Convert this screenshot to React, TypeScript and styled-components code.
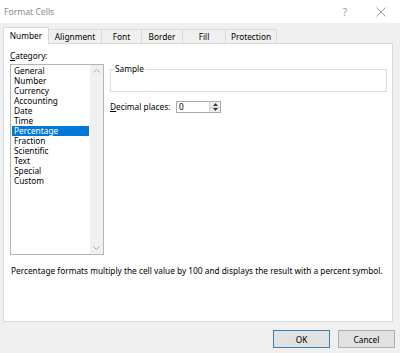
import React from "react";
import styled, { createGlobalStyle } from "styled-components";

const FS = "8.3px";

const Global = createGlobalStyle`
  html, body { margin: 0; padding: 0; background: #f0f0f0; }
  body { font-family: "Segoe UI", "Noto Sans", "Open Sans", sans-serif; font-size: ${FS}; color: #000; }
  * { box-sizing: border-box; }
`;

const Window = styled.div`
  width: 400px;
  height: 353px;
  background: #f0f0f0;
  display: flex;
  flex-direction: column;
  overflow: hidden;
`;

const TitleBar = styled.div`
  height: 23px;
  background: #fff;
  display: flex;
  align-items: center;
  padding-left: 4px;
`;

const Title = styled.div`
  flex: 1;
  color: #8a8a8a;
  font-size: 8.6px;
`;

const TitleButton = styled.div<{ $w: number }>`
  width: ${(p) => p.$w}px;
  height: 23px;
  display: flex;
  align-items: center;
  justify-content: center;
  color: #9a9a9a;
  font-size: 10px;
`;

const TabStrip = styled.div`
  display: flex;
  margin: 6px 0 0 3px;
  height: 15px;
  position: relative;
  z-index: 1;
`;

const Tab = styled.div<{ $w: number; $active?: boolean }>`
  width: ${(p) => p.$w}px;
  height: ${(p) => (p.$active ? 17 : 15)}px;
  margin-top: ${(p) => (p.$active ? -2 : 0)}px;
  margin-right: -1px;
  background: ${(p) => (p.$active ? "#fff" : "#f0f0f0")};
  border: 1px solid #d9d9d9;
  border-bottom: ${(p) => (p.$active ? "none" : "1px solid #d9d9d9")};
  display: flex;
  align-items: center;
  justify-content: center;
  font-size: ${FS};
  line-height: 10px;
  padding-bottom: ${(p) => (p.$active ? 1 : 0)}px;
  white-space: nowrap;
`;

const Panel = styled.div`
  margin: 0 7px 0 3px;
  height: 279px;
  background: #fff;
  border: 1px solid #d9d9d9;
  margin-top: -1px;
  padding: 7px 5px 0 6px;
  display: flex;
  flex-direction: column;
`;

const Columns = styled.div`
  display: flex;
  gap: 6px;
`;

const LeftCol = styled.div`
  width: 94px;
  display: flex;
  flex-direction: column;
`;

const Label = styled.div`
  height: 11px;
  line-height: 10px;
  font-size: ${FS};
  margin-bottom: 2px;
`;

const ListBox = styled.div`
  height: 191px;
  border: 1px solid #b5b5b5;
  display: flex;
  background: #fff;
`;

const Items = styled.div`
  flex: 1;
  padding: 1px 1px 0 1px;
  display: flex;
  flex-direction: column;
`;

const Item = styled.div<{ $sel?: boolean }>`
  height: 10px;
  line-height: 10px;
  font-size: ${FS};
  padding-left: 2px;
  background: ${(p) => (p.$sel ? "#0078d7" : "transparent")};
  color: ${(p) => (p.$sel ? "#fff" : "#000")};
  white-space: nowrap;
`;

const ScrollBar = styled.div`
  width: 13px;
  background: #f0f0f0;
  display: flex;
  flex-direction: column;
  justify-content: space-between;
  align-items: center;
  padding: 4px 0;
`;

const RightCol = styled.div`
  flex: 1;
  display: flex;
  flex-direction: column;
  padding-top: 13px;
`;

const Group = styled.fieldset`
  margin: 0;
  padding: 0;
  height: 28px;
  border: 1px solid #dcdcdc;
  position: relative;
`;

const Legend = styled.legend`
  font-size: ${FS};
  line-height: 10px;
  padding: 0 1px;
  margin-left: 3px;
  color: #000;
`;

const DecimalRow = styled.div`
  display: flex;
  align-items: center;
  margin-top: 9px;
  height: 12px;
`;

const DecimalLabel = styled.div`
  width: 66px;
  font-size: ${FS};
  line-height: 10px;
  white-space: nowrap;
`;

const Spin = styled.div`
  width: 45px;
  height: 12px;
  border: 1px solid #a9a9a9;
  display: flex;
  background: #fff;
`;

const SpinValue = styled.div`
  flex: 1;
  font-size: ${FS};
  line-height: 10px;
  padding-left: 2px;
`;

const SpinButtons = styled.div`
  width: 11px;
  display: flex;
  flex-direction: column;
  border-left: 1px solid #d0d0d0;
  background: #f0f0f0;
`;

const SpinHalf = styled.div<{ $top?: boolean }>`
  flex: 1;
  display: flex;
  align-items: center;
  justify-content: center;
  border-bottom: ${(p) => (p.$top ? "1px solid #d0d0d0" : "none")};
`;

const Description = styled.div`
  margin-top: 11px;
  font-size: ${FS};
  line-height: 10px;
  padding-left: 1px;
  white-space: nowrap;
`;

const Footer = styled.div`
  display: flex;
  justify-content: flex-end;
  gap: 8px;
  padding: 8px 5px 0 0;
`;

const Button = styled.div<{ $default?: boolean }>`
  width: 57px;
  height: 18px;
  background: #e1e1e1;
  border: 1px solid ${(p) => (p.$default ? "#3c7fb1" : "#adadad")};
  display: flex;
  align-items: center;
  justify-content: center;
  font-size: ${FS};
`;

const U = styled.span`
  text-decoration: underline;
`;

const Chevron = ({ up }: { up?: boolean }) => (
  <svg width="7" height="4" viewBox="0 0 7 4">
    <path
      d={up ? "M0.5 3.5 L3.5 0.5 L6.5 3.5" : "M0.5 0.5 L3.5 3.5 L6.5 0.5"}
      fill="none"
      stroke="#a6a6a6"
      strokeWidth="1"
    />
  </svg>
);

const Tri = ({ up }: { up?: boolean }) => (
  <svg width="5" height="3" viewBox="0 0 5 3">
    <path d={up ? "M0 3 L2.5 0 L5 3 Z" : "M0 0 L2.5 3 L5 0 Z"} fill="#333" />
  </svg>
);

const categories = [
  "General",
  "Number",
  "Currency",
  "Accounting",
  "Date",
  "Time",
  "Percentage",
  "Fraction",
  "Scientific",
  "Text",
  "Special",
  "Custom",
];

const tabs: [string, number][] = [
  ["Number", 46],
  ["Alignment", 54],
  ["Font", 41],
  ["Border", 42],
  ["Fill", 44],
  ["Protection", 52],
];

export default function App() {
  return (
    <Window>
      <Global />
      <TitleBar>
        <Title>Format Cells</Title>
        <TitleButton $w={34}>?</TitleButton>
        <TitleButton $w={38}>
          <svg width="10" height="10" viewBox="0 0 10 10">
            <path d="M0.5 0.5 L9.5 9.5 M9.5 0.5 L0.5 9.5" stroke="#9a9a9a" strokeWidth="1" />
          </svg>
        </TitleButton>
      </TitleBar>
      <TabStrip>
        {tabs.map(([t, w], i) => (
          <Tab key={t} $w={w} $active={i === 0}>
            {t}
          </Tab>
        ))}
      </TabStrip>
      <Panel>
        <Columns>
          <LeftCol>
            <Label>
              <U>C</U>ategory:
            </Label>
            <ListBox>
              <Items>
                {categories.map((c) => (
                  <Item key={c} $sel={c === "Percentage"}>
                    {c}
                  </Item>
                ))}
              </Items>
              <ScrollBar>
                <Chevron up />
                <Chevron />
              </ScrollBar>
            </ListBox>
          </LeftCol>
          <RightCol>
            <Group>
              <Legend>Sample</Legend>
            </Group>
            <DecimalRow>
              <DecimalLabel>
                <U>D</U>ecimal places:
              </DecimalLabel>
              <Spin>
                <SpinValue>0</SpinValue>
                <SpinButtons>
                  <SpinHalf $top>
                    <Tri up />
                  </SpinHalf>
                  <SpinHalf>
                    <Tri />
                  </SpinHalf>
                </SpinButtons>
              </Spin>
            </DecimalRow>
          </RightCol>
        </Columns>
        <Description>
          Percentage formats multiply the cell value by 100 and displays the result with a percent symbol.
        </Description>
      </Panel>
      <Footer>
        <Button $default>OK</Button>
        <Button>Cancel</Button>
      </Footer>
    </Window>
  );
}
